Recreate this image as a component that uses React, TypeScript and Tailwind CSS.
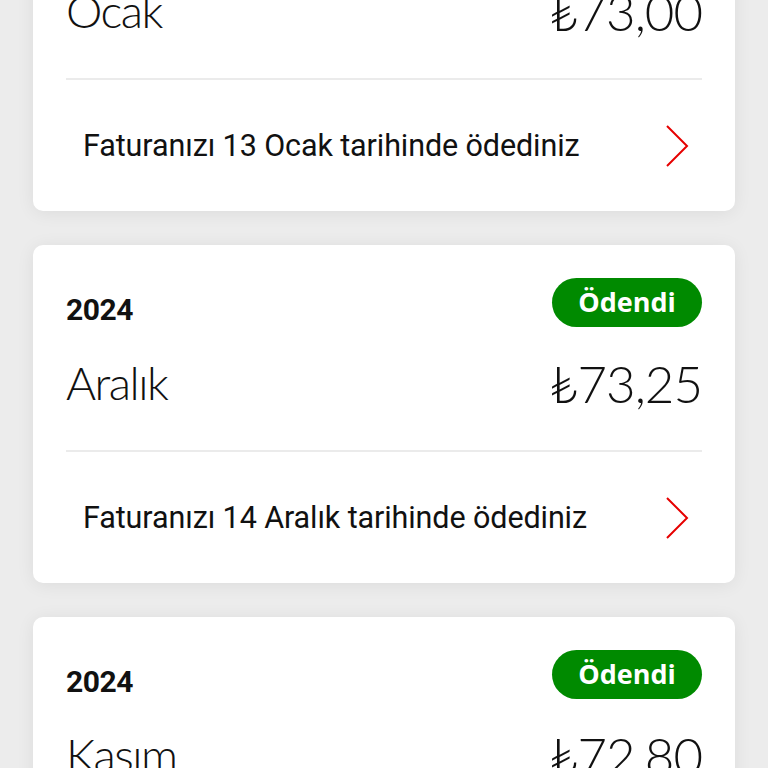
import React from "react";

type Bill = { year: string; month: string; amount: string; paidText: string };

const bills: Bill[] = [
  { year: "2025", month: "Ocak", amount: "₺73,00", paidText: "Faturanızı 13 Ocak tarihinde ödediniz" },
  { year: "2024", month: "Aralık", amount: "₺73,25", paidText: "Faturanızı 14 Aralık tarihinde ödediniz" },
  { year: "2024", month: "Kasım", amount: "₺72,80", paidText: "Faturanızı 13 Kasım tarihinde ödediniz" },
];

function Chevron() {
  return (
    <svg width="24" height="42" viewBox="0 0 24 42" fill="none" className="shrink-0">
      <path d="M2 1 L22 21 L2 41" stroke="#e60000" strokeWidth="2" strokeLinejoin="miter" />
    </svg>
  );
}

function BillCard({ bill }: { bill: Bill }) {
  return (
    <div className="bg-white rounded-[10px] shadow-[0_2px_18px_rgba(0,0,0,0.07)] h-[338px] shrink-0 flex flex-col">
      <div className="px-[33px] pt-[33px]">
        <div className="flex items-start justify-between h-[49px]">
          <span className="mt-[14px] text-[30px] leading-[36px] font-bold tracking-[-0.5px] text-[#111]" style={{ fontFamily: "Roboto, 'Liberation Sans', sans-serif" }}>
            {bill.year}
          </span>
          <span className="h-[49px] w-[150px] rounded-full bg-[#008a00] text-white flex items-center justify-center text-[27px] font-bold" style={{ fontFamily: "'Open Sans', 'Liberation Sans', sans-serif" }}>
            Ödendi
          </span>
        </div>
        <div className="flex items-center justify-between mt-[25px] h-[62px] text-[#111]" style={{ fontFamily: "Lato, 'DejaVu Sans', sans-serif" }}>
          <span className="text-[46px] font-light leading-none tracking-[-1.5px]">{bill.month}</span>
          <span className="text-[51px] font-light leading-none tracking-[-1px]">{bill.amount}</span>
        </div>
        <div className="mt-[36px] h-[2px] bg-[#ebebeb]" />
      </div>
      <div className="flex-1 flex items-center justify-between pl-[50px] pr-[46px]">
        <span className="text-[30.5px] text-[#111] tracking-[-0.1px]" style={{ fontFamily: "Roboto, 'Liberation Sans', sans-serif" }}>
          {bill.paidText}
        </span>
        <Chevron />
      </div>
    </div>
  );
}

export default function App() {
  return (
    <div className="w-[768px] h-[768px] overflow-hidden bg-[#ececec]">
      <div className="flex flex-col gap-[34px] px-[33px] mt-[-127px]">
        {bills.map((b, i) => (
          <BillCard key={i} bill={b} />
        ))}
      </div>
    </div>
  );
}
